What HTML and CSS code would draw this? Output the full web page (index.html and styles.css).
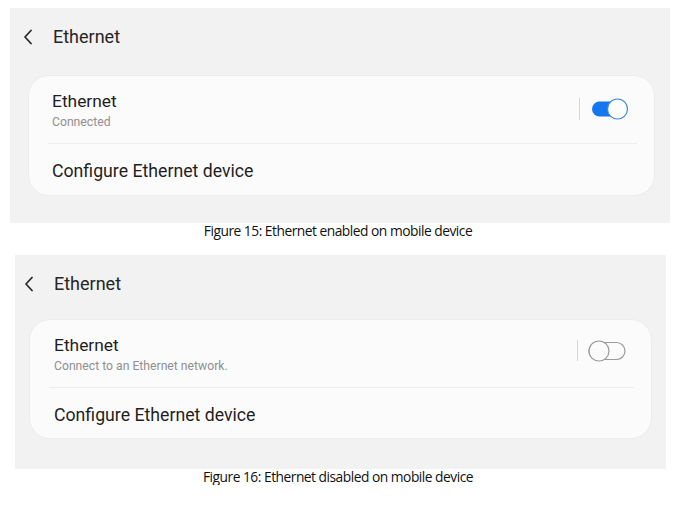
FILE: index.html
```html
<!DOCTYPE html>
<html lang="en">
<head>
<meta charset="utf-8">
<title>Ethernet settings</title>
<link rel="stylesheet" href="styles.css">
</head>
<body>
<section class="shot shot-on">
  <header class="appbar">
    <svg class="back" width="10" height="16" viewBox="0 0 10 16"><path d="M8 1.5 L2 8 L8 14.5" fill="none" stroke="#2b2b2b" stroke-width="1.8" stroke-linecap="round" stroke-linejoin="round"/></svg>
    <span class="appbar-title">Ethernet</span>
  </header>
  <div class="card">
    <div class="row row-main">
      <div class="row-text">
        <div class="row-title">Ethernet</div>
        <div class="row-sub">Connected</div>
      </div>
      <span class="vbar"></span>
      <svg class="toggle" width="38" height="22" viewBox="0 0 38 22"><rect x="1" y="3.5" width="30" height="15" rx="7.5" fill="#1577ef"/><circle cx="26.5" cy="11" r="10" fill="#fff" stroke="#3c86d6" stroke-width="1.2"/></svg>
    </div>
    <div class="divider"></div>
    <div class="row row-link">Configure Ethernet device</div>
  </div>
</section>
<p class="caption">Figure 15: Ethernet enabled on mobile device</p>

<section class="shot shot-off">
  <header class="appbar">
    <svg class="back" width="10" height="16" viewBox="0 0 10 16"><path d="M8 1.5 L2 8 L8 14.5" fill="none" stroke="#2b2b2b" stroke-width="1.8" stroke-linecap="round" stroke-linejoin="round"/></svg>
    <span class="appbar-title">Ethernet</span>
  </header>
  <div class="card">
    <div class="row row-main">
      <div class="row-text">
        <div class="row-title">Ethernet</div>
        <div class="row-sub">Connect to an Ethernet network.</div>
      </div>
      <span class="vbar"></span>
      <svg class="toggle" width="38" height="22" viewBox="0 0 38 22"><rect x="1" y="2.5" width="36" height="17" rx="8.5" fill="none" stroke="#9a9a9a" stroke-width="1.2"/><circle cx="11" cy="11" r="10" fill="#fbfbfb" stroke="#9a9a9a" stroke-width="1.2"/></svg>
    </div>
    <div class="divider"></div>
    <div class="row row-link">Configure Ethernet device</div>
  </div>
</section>
<p class="caption">Figure 16: Ethernet disabled on mobile device</p>
</body>
</html>
```
FILE: styles.css
```css
html, body {
  margin: 0;
  padding: 0;
  background: #ffffff;
}
body {
  padding-top: 8px;
  font-family: Roboto, "Noto Sans", sans-serif;
  color: #1f1f1f;
}
.shot {
  background: #f2f2f2;
  box-sizing: border-box;
  display: flex;
  flex-direction: column;
}
.shot-on {
  margin-left: 10px;
  width: 660px;
  height: 215px;
  padding: 0 16px 0 19px;
}
.shot-off {
  margin-left: 15px;
  width: 651px;
  height: 214px;
  padding: 0 15px 0 15px;
}
.appbar {
  height: 68px;
  box-sizing: border-box;
  padding-top: 17px;
  display: flex;
  align-items: flex-start;
}
.shot-on .appbar { margin-left: -6px; }
.shot-off .appbar { margin-left: -6px; height: 65px; }
.back {
  margin-top: 4px;
  flex: none;
}
.appbar-title {
  margin-left: 20px;
  font-size: 18px;
  line-height: 24px;
  color: #262626;
}
.card {
  background: #fbfbfb;
  border-radius: 20px;
  height: 119px;
  box-sizing: border-box;
  box-shadow: 0 0 0 1px #ececec;
  display: flex;
  flex-direction: column;
}
.shot-off .card { height: 118px; }
.row-main {
  height: 68px;
  box-sizing: border-box;
  padding: 15px 25px 0 23px;
  display: flex;
  align-items: flex-start;
}
.row-text {
  flex: 1;
}
.row-title {
  font-size: 17.4px;
  line-height: 20px;
  color: #1f1f1f;
}
.row-sub {
  margin-top: 3px;
  font-size: 12.2px;
  line-height: 16px;
  color: #8f8f8f;
}
.vbar {
  width: 1px;
  height: 22px;
  background: #d6d6d6;
  margin-top: 7px;
  margin-right: 11px;
}
.toggle {
  margin-top: 7px;
  flex: none;
}
.shot-off .vbar { margin-top: 5px; height: 21px; margin-right: 10px; }
.shot-off .toggle { margin-top: 5px; }
.divider {
  height: 1px;
  background: #ededed;
  margin: -1px 17px 0 19px;
}
.row-link {
  padding: 17px 0 0 23px;
  font-size: 17.7px;
  line-height: 20px;
  color: #1f1f1f;
}
.shot-off .row-link { padding-left: 24px; }
.shot-off .row-main { padding-left: 24px; }
.caption {
  margin: 0;
  height: 16px;
  line-height: 16px;
  text-align: center;
  font-family: "Open Sans", sans-serif;
  font-size: 13.8px;
  letter-spacing: -0.5px;
  color: #111;
}
.caption + .shot { margin-top: 16px; }
```
